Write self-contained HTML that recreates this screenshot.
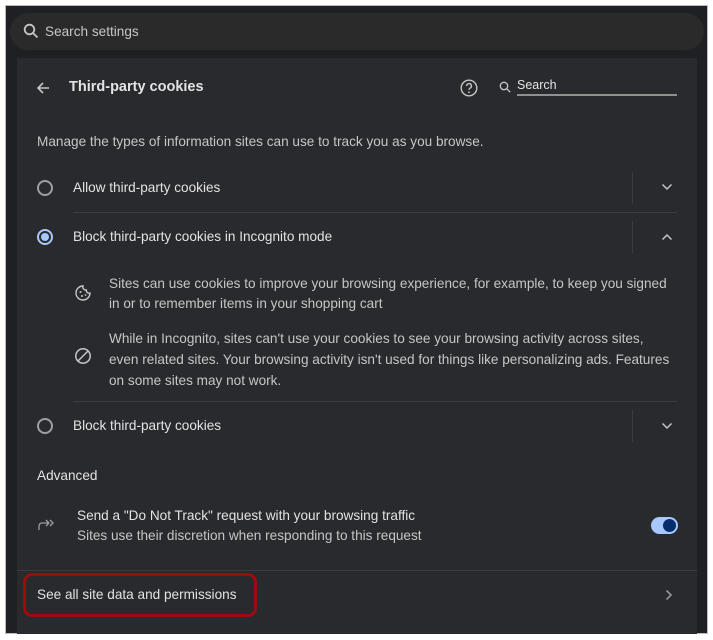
<!DOCTYPE html>
<html><head><meta charset="utf-8"><style>
*{margin:0;padding:0;box-sizing:border-box}
body{width:713px;height:640px;background:#fff;font-family:"Liberation Sans",sans-serif;position:relative;overflow:hidden}
.win{position:absolute;left:5px;top:5px;width:703px;height:629px;background:#1f2023;border:1px solid #bbb}
.sb{position:absolute;left:10px;top:13px;width:694px;height:37px;background:#2a2a2b;border-radius:19px}
.card{position:absolute;left:17px;top:58px;width:680px;height:576px;background:#292a2d}
.t{position:absolute;color:#e3e3e3;font-size:13.6px;white-space:nowrap}
.s{color:#c4c7c5}
.sep{position:absolute;height:1px;background:#3c3d40}
.vs{position:absolute;width:1px;height:32px;background:#3c3d40}
.radio{position:absolute;width:16px;height:16px;border:2px solid #9aa0a6;border-radius:50%}
svg{position:absolute}
</style></head><body>
<div class="win"></div>
<div class="sb"></div>
<svg style="left:23px;top:23px" width="16" height="16" viewBox="0 0 16 16"><circle cx="6.5" cy="6.5" r="4.8" fill="none" stroke="#c4c7c5" stroke-width="1.8"/><path d="M10 10l4.5 4.5" stroke="#c4c7c5" stroke-width="1.8"/></svg>
<div class="t s" style="left:45px;top:24px">Search settings</div>
<div class="card"></div>
<svg style="left:35px;top:80px" width="16" height="16" viewBox="0 0 16 16"><path d="M14 8H3M8 3L3 8l5 5" fill="none" stroke="#c4c7c5" stroke-width="1.6"/></svg>
<div class="t" style="left:69px;top:79px;font-size:14.5px;font-weight:bold;color:#e3e3e3">Third-party cookies</div>
<svg style="left:460px;top:79px" width="18" height="18" viewBox="0 0 18 18"><circle cx="9" cy="9" r="7.8" fill="none" stroke="#c4c7c5" stroke-width="1.4"/><path d="M6.6 7a2.4 2.4 0 1 1 3.4 2.2c-.7.4-1 .8-1 1.6" fill="none" stroke="#c4c7c5" stroke-width="1.4"/><circle cx="9" cy="13.3" r=".9" fill="#c4c7c5"/></svg>
<svg style="left:499px;top:81px" width="12" height="12" viewBox="0 0 12 12"><circle cx="5" cy="5" r="3.7" fill="none" stroke="#c4c7c5" stroke-width="1.3"/><path d="M7.7 7.7l3.5 3.5" stroke="#c4c7c5" stroke-width="1.3"/></svg>
<div class="t" style="left:517px;top:78px;font-size:12.5px">Search</div>
<div style="position:absolute;left:517px;top:94px;width:160px;height:2px;background:#8e918f"></div>
<div class="t s" style="left:37px;top:134px">Manage the types of information sites can use to track you as you browse.</div>
<div class="radio" style="left:37px;top:180px"></div>
<div class="t" style="left:73px;top:180px">Allow third-party cookies</div>
<div class="vs" style="left:632px;top:172px"></div>
<svg style="left:661px;top:183px" width="12" height="8" viewBox="0 0 12 8"><path d="M1.5 1.5L6 6l4.5-4.5" fill="none" stroke="#c4c7c5" stroke-width="1.5"/></svg>
<div class="sep" style="left:73px;top:212px;width:604px"></div>
<div class="radio" style="left:37px;top:229px;border-color:#a8c7fa"><div style="position:absolute;left:2px;top:2px;width:8px;height:8px;border-radius:50%;background:#a8c7fa"></div></div>
<div class="t" style="left:73px;top:229px">Block third-party cookies in Incognito mode</div>
<div class="vs" style="left:632px;top:221px"></div>
<svg style="left:661px;top:233px" width="12" height="8" viewBox="0 0 12 8"><path d="M1.5 6.5L6 2l4.5 4.5" fill="none" stroke="#c4c7c5" stroke-width="1.5"/></svg>
<svg style="left:74px;top:284px" width="18" height="18" viewBox="0 0 18 18"><path d="M9 2a7 7 0 1 0 7 7.2A3 3 0 0 1 12.3 6 3 3 0 0 1 9 2z" fill="none" stroke="#c4c7c5" stroke-width="1.4"/><circle cx="6.5" cy="8" r="1" fill="#c4c7c5"/><circle cx="8" cy="12" r="1" fill="#c4c7c5"/><circle cx="11.5" cy="11" r=".9" fill="#c4c7c5"/></svg>
<div class="t s" style="left:109px;top:274px;line-height:20px">Sites can use cookies to improve your browsing experience, for example, to keep you signed<br>in or to remember items in your shopping cart</div>
<svg style="left:74px;top:347px" width="18" height="18" viewBox="0 0 18 18"><circle cx="9" cy="9" r="7.2" fill="none" stroke="#c4c7c5" stroke-width="1.5"/><path d="M4 14L14 4" stroke="#c4c7c5" stroke-width="1.5"/></svg>
<div class="t s" style="left:109px;top:328px;line-height:21px">While in Incognito, sites can't use your cookies to see your browsing activity across sites,<br>even related sites. Your browsing activity isn't used for things like personalizing ads. Features<br>on some sites may not work.</div>
<div class="sep" style="left:73px;top:401px;width:604px"></div>
<div class="radio" style="left:37px;top:418px"></div>
<div class="t" style="left:73px;top:418px">Block third-party cookies</div>
<div class="vs" style="left:632px;top:410px"></div>
<svg style="left:661px;top:422px" width="12" height="8" viewBox="0 0 12 8"><path d="M1.5 1.5L6 6l4.5-4.5" fill="none" stroke="#c4c7c5" stroke-width="1.5"/></svg>
<div class="t" style="left:37px;top:468px">Advanced</div>
<svg style="left:37px;top:518px" width="20" height="14" viewBox="0 0 20 14"><path d="M2 12V8a3 3 0 0 1 3-3h6M9 2l3 3-3 3M13 2l3 3-3 3" fill="none" stroke="#9aa0a6" stroke-width="1.3"/></svg>
<div class="t" style="left:77px;top:508px">Send a "Do Not Track" request with your browsing traffic</div>
<div class="t s" style="left:77px;top:528px">Sites use their discretion when responding to this request</div>
<div style="position:absolute;left:651px;top:517px;width:27px;height:17px;border-radius:9px;background:#a8c7fa"></div>
<div style="position:absolute;left:663px;top:519px;width:13px;height:13px;border-radius:50%;background:#062e6f"></div>
<div class="sep" style="left:17px;top:570px;width:680px"></div>
<div style="position:absolute;left:23px;top:573px;width:234px;height:44px;border:3px solid #9e0b0f;border-radius:9px"></div>
<div class="t" style="left:37px;top:587px">See all site data and permissions</div>
<svg style="left:665px;top:589px" width="8" height="12" viewBox="0 0 8 12"><path d="M1.5 1.5L6 6l-4.5 4.5" fill="none" stroke="#9aa0a6" stroke-width="1.5"/></svg>
</body></html>
